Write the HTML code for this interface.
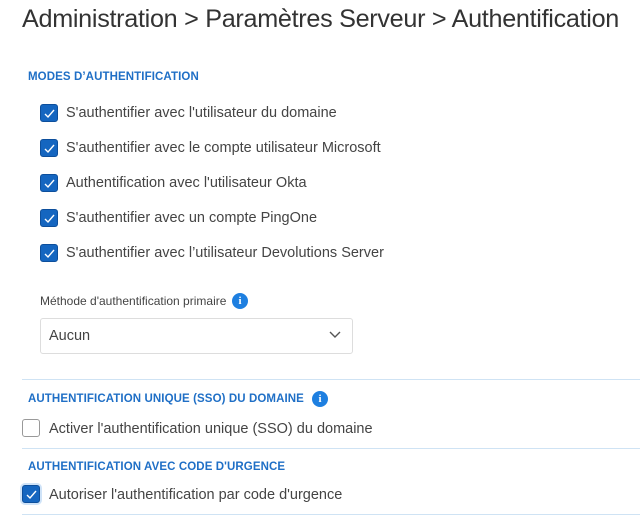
<!DOCTYPE html>
<html><head><style>
*{margin:0;padding:0;box-sizing:border-box}
body{width:640px;height:523px;background:#fff;font-family:"Liberation Sans",sans-serif;position:relative;overflow:hidden;color:#444}
.a{position:absolute;white-space:nowrap}
h1{position:absolute;left:22px;top:5px;font-size:25.2px;font-weight:normal;color:#333;letter-spacing:-0.3px}
.hd{font-size:11.5px;font-weight:bold;color:#1f6fc6;letter-spacing:0.1px}
.cb{position:absolute;width:18px;height:18px;border-radius:3px;background:#1566c0;border:1px solid #0d4f9c}
.cb svg{position:absolute;left:2px;top:2px}
.un{background:#fff;border:1.5px solid #999}
.t{font-size:14.5px;color:#444}
.ln{position:absolute;left:22px;right:0;height:1px;background:#cfe3f4}
.info{position:absolute;width:16px;height:16px;border-radius:50%;background:#1e7fe0;color:#fff;font-size:11px;font-weight:bold;text-align:center;line-height:16px;font-family:"Liberation Serif",serif}
</style></head><body>
<h1>Administration &gt; Paramètres Serveur &gt; Authentification</h1>
<div class="a hd" style="left:28px;top:71px">MODES D’AUTHENTIFICATION</div>

<div class="cb" style="left:40px;top:104px"><svg width="13" height="13" viewBox="0 0 13 13"><path d="M2 7l3 3 6-7" stroke="#fff" stroke-width="1.4" fill="none"/></svg></div>
<div class="a t" style="left:66px;top:105px">S'authentifier avec l'utilisateur du domaine</div>
<div class="cb" style="left:40px;top:139px"><svg width="13" height="13" viewBox="0 0 13 13"><path d="M2 7l3 3 6-7" stroke="#fff" stroke-width="1.4" fill="none"/></svg></div>
<div class="a t" style="left:66px;top:140px">S'authentifier avec le compte utilisateur Microsoft</div>
<div class="cb" style="left:40px;top:174px"><svg width="13" height="13" viewBox="0 0 13 13"><path d="M2 7l3 3 6-7" stroke="#fff" stroke-width="1.4" fill="none"/></svg></div>
<div class="a t" style="left:66px;top:175px">Authentification avec l'utilisateur Okta</div>
<div class="cb" style="left:40px;top:209px"><svg width="13" height="13" viewBox="0 0 13 13"><path d="M2 7l3 3 6-7" stroke="#fff" stroke-width="1.4" fill="none"/></svg></div>
<div class="a t" style="left:66px;top:210px">S'authentifier avec un compte PingOne</div>
<div class="cb" style="left:40px;top:244px"><svg width="13" height="13" viewBox="0 0 13 13"><path d="M2 7l3 3 6-7" stroke="#fff" stroke-width="1.4" fill="none"/></svg></div>
<div class="a t" style="left:66px;top:245px">S'authentifier avec l’utilisateur Devolutions Server</div>

<div class="a" style="left:40px;top:294px;font-size:12px;color:#444">Méthode d'authentification primaire</div>
<div class="info" style="left:232px;top:293px">i</div>
<div class="a" style="left:40px;top:318px;width:313px;height:36px;border:1px solid #ddd;border-radius:3px"></div>
<div class="a t" style="left:49px;top:328px">Aucun</div>
<svg class="a" style="left:329px;top:331px" width="12" height="8" viewBox="0 0 12 8"><path d="M1 1l5 5 5-5" stroke="#555" stroke-width="1.4" fill="none"/></svg>

<div class="ln" style="top:379px"></div>
<div class="a hd" style="left:28px;top:393px">AUTHENTIFICATION UNIQUE (SSO) DU DOMAINE</div>
<div class="info" style="left:312px;top:391px">i</div>
<div class="cb un" style="left:22px;top:419px"></div>
<div class="a t" style="left:49px;top:421px">Activer l'authentification unique (SSO) du domaine</div>
<div class="ln" style="top:448px"></div>
<div class="a hd" style="left:28px;top:461px">AUTHENTIFICATION AVEC CODE D'URGENCE</div>
<div class="cb" style="left:22px;top:485px;box-shadow:0 0 0 2px #cfe3f8"><svg width="13" height="13" viewBox="0 0 13 13"><path d="M2 7l3 3 6-7" stroke="#fff" stroke-width="1.4" fill="none"/></svg></div>
<div class="a t" style="left:49px;top:487px">Autoriser l'authentification par code d'urgence</div>
<div class="ln" style="top:514px"></div>
</body></html>
